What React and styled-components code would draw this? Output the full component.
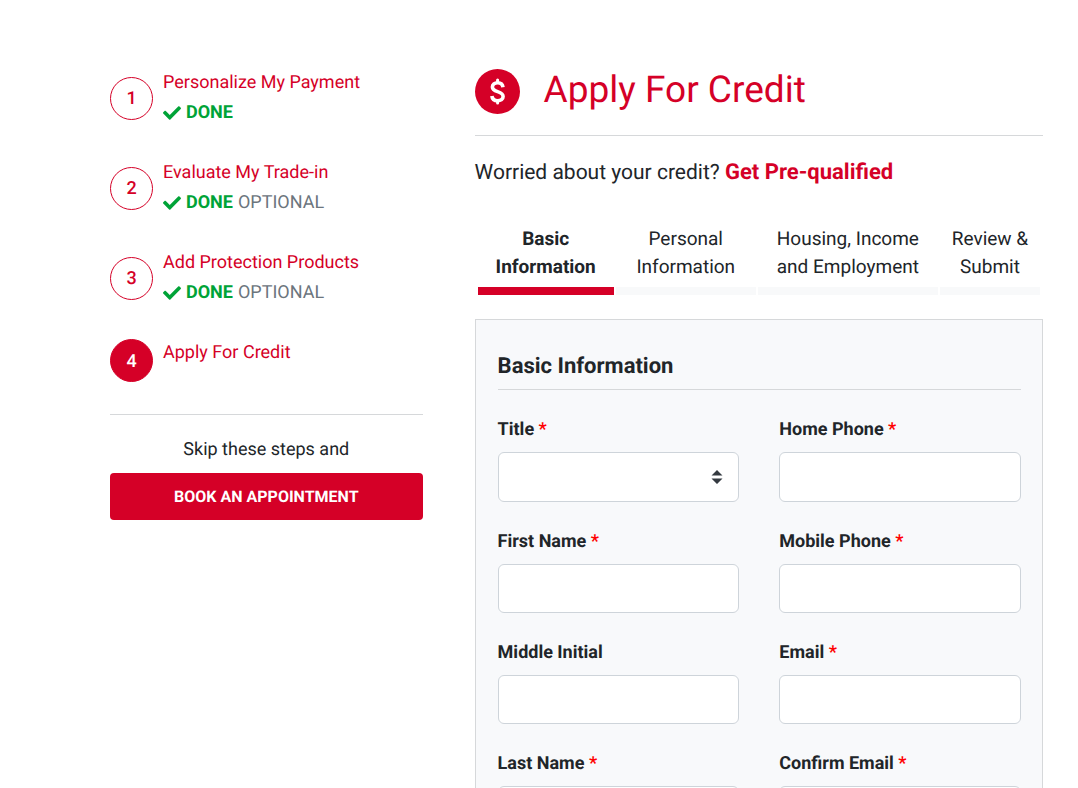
import React, { useState } from 'react'
import styled, { createGlobalStyle } from 'styled-components'
import { FaCheck } from 'react-icons/fa'

const red = '#d50027'
const green = '#00a337'
const ink = '#212529'
const rule = '#d6d8da'

const GlobalStyle = createGlobalStyle`
  *, *::before, *::after {
    box-sizing: border-box;
  }
  body {
    margin: 0;
    background: #fff;
    color: ${ink};
    font-family: Roboto, "Liberation Sans", sans-serif;
    font-size: 18px;
    line-height: 30px;
    text-rendering: geometricPrecision;
  }
`

const Page = styled.div`
  display: grid;
  grid-template-columns: 11fr 20fr;
  column-gap: 52px;
  align-items: start;
  padding: 68px 35px 40px 110px;
`

const StepList = styled.ol`
  display: flex;
  flex-direction: column;
  gap: 30px;
  margin: 0;
  padding: 0 0 32px;
  border-bottom: 1px solid ${rule};
  list-style: none;
`

const Step = styled.li`
  display: flex;
  align-items: ${({ $current }) => ($current ? 'flex-start' : 'center')};
  gap: 10px;
`

const StepNumber = styled.span`
  display: flex;
  flex: none;
  align-items: center;
  justify-content: center;
  width: 43px;
  height: 43px;
  margin-top: ${({ $current }) => ($current ? '1px' : 0)};
  padding-top: 2px;
  border: 1px solid ${red};
  border-radius: 50%;
  background: ${({ $current }) => ($current ? red : '#fff')};
  color: ${({ $current }) => ($current ? '#fff' : red)};
  font-weight: 500;
`

const StepLink = styled.a`
  display: block;
  color: ${red};
  text-decoration: none;
`

const Status = styled.div`
  display: flex;
  align-items: center;
  gap: 5px;
  color: #6c757d;

  svg {
    color: ${green};
  }

  strong {
    color: ${green};
  }
`

const Skip = styled.p`
  margin: 20px 0 8px;
  text-align: center;
`

const BookButton = styled.button`
  width: 100%;
  height: 47px;
  border: 0;
  border-radius: 4px;
  background: ${red};
  color: #fff;
  font: 700 16px Roboto, "Liberation Sans", sans-serif;
  text-rendering: inherit;
  cursor: pointer;
`

const Header = styled.header`
  display: flex;
  align-items: center;
  gap: 24px;
  padding-bottom: 21px;
  border-bottom: 1px solid ${rule};
`

const HeaderIcon = styled.svg`
  flex: none;
  width: 45px;
  height: 45px;
`

const PageTitle = styled.h1`
  margin: 0;
  color: ${red};
  font-size: 37px;
  font-weight: 400;
  line-height: 46px;
`

const Prequalify = styled.p`
  margin: 22px 0 37px;
  font-size: 21px;

  a {
    color: ${red};
    font-size: 22px;
    font-weight: 700;
    text-decoration: none;
  }
`

const Tabs = styled.nav`
  display: grid;
  grid-template-columns: 34fr 35fr 45fr 25fr;
  gap: 2px;
  padding: 0 3px;
`

const Tab = styled.button`
  padding: 0 8px 6px;
  border: 0;
  border-bottom: 8px solid ${({ $active }) => ($active ? red : '#f8f9fa')};
  background: none;
  color: ${ink};
  font-family: inherit;
  font-size: 19px;
  font-weight: ${({ $active }) => ($active ? 700 : 400)};
  line-height: 28px;
  text-align: center;
  text-rendering: inherit;
  cursor: pointer;
`

const Panel = styled.section`
  margin-top: 24px;
  padding: 32px 21px 22px 22px;
  border: 1px solid ${rule};
  background: #f8f9fb;
`

const PanelTitle = styled.h2`
  margin: 0 0 25px;
  padding-bottom: 7px;
  border-bottom: 1px solid ${rule};
  font-size: 22px;
  font-weight: 700;
  line-height: 30px;
`

const Form = styled.form`
  display: grid;
  grid-template-columns: 1fr 1fr;
  gap: 25px 40px;
`

const Field = styled.div`
  display: flex;
  flex-direction: column;
  gap: 7px;
`

const Label = styled.label`
  font-weight: 700;
`

const Required = styled.span`
  color: #f00;
`

const Input = styled.input`
  flex: 1 0 auto;
  width: 100%;
  min-height: 49px;
  padding: 8px 16px;
  border: 1px solid #ced4da;
  border-radius: 6px;
  background: #fff;
  color: ${ink};
  font: inherit;
`

const SelectWrap = styled.div`
  position: relative;
`

const Select = styled(Input).attrs({ as: 'select' })`
  display: block;
  height: 50px;
  appearance: none;
`

const SelectArrows = styled.svg`
  position: absolute;
  top: 18px;
  right: 16px;
  width: 12px;
  height: 14px;
  pointer-events: none;
`

const steps = [
  { title: 'Personalize My Payment', done: true },
  { title: 'Evaluate My Trade-in', done: true, optional: true },
  { title: 'Add Protection Products', done: true, optional: true },
  { title: 'Apply For Credit', current: true },
]

const tabs = ['Basic Information', 'Personal Information', 'Housing, Income and Employment', 'Review & Submit']

const fields = [
  { name: 'title', label: 'Title', required: true, options: ['', 'Mr.', 'Mrs.', 'Ms.'] },
  { name: 'homePhone', label: 'Home Phone', required: true, type: 'tel' },
  { name: 'firstName', label: 'First Name', required: true },
  { name: 'mobilePhone', label: 'Mobile Phone', required: true, type: 'tel' },
  { name: 'middleInitial', label: 'Middle Initial' },
  { name: 'email', label: 'Email', required: true, type: 'email' },
  { name: 'lastName', label: 'Last Name', required: true },
  { name: 'confirmEmail', label: 'Confirm Email', required: true, type: 'email' },
]

const FormField = ({ name, label, required, type = 'text', options, value, onChange }) => {
  const props = { id: name, name, required, value, onChange }

  return (
    <Field>
      <Label htmlFor={name}>
        {label} {required && <Required>*</Required>}
      </Label>
      {options ? (
        <SelectWrap>
          <Select {...props}>
            {options.map(option => <option key={option}>{option}</option>)}
          </Select>
          <SelectArrows viewBox="0 0 12 14" aria-hidden="true">
            <path fill="#343a40" d="M6 0 11.500 5.500H.5ZM.5 8.500h11L6 14Z" />
          </SelectArrows>
        </SelectWrap>
      ) : (
        <Input type={type} {...props} />
      )}
    </Field>
  )
}

const App = () => {
  const [activeTab, setActiveTab] = useState(0)
  const [values, setValues] = useState({})

  const handleChange = e => {
    setValues({ ...values, [e.target.name]: e.target.value })
  }

  return (
    <>
      <GlobalStyle />
      <Page>
        <aside>
          <StepList>
            {steps.map(({ title, done, optional, current }, idx) => (
              <Step key={title} $current={current}>
                <StepNumber $current={current}>{idx + 1}</StepNumber>
                <div>
                  <StepLink href="#">{title}</StepLink>
                  {done && (
                    <Status>
                      <FaCheck size={18} />
                      <strong>DONE</strong>
                      {optional && <span>OPTIONAL</span>}
                    </Status>
                  )}
                </div>
              </Step>
            ))}
          </StepList>
          <Skip>Skip these steps and</Skip>
          <BookButton type="button">BOOK AN APPOINTMENT</BookButton>
        </aside>
        <main>
          <Header>
            <HeaderIcon viewBox="0 0 45 45" aria-hidden="true">
              <circle cx="22.500" cy="22.500" r="22.500" fill={red} />
              <path
                d="M28 18.300c-.3-2.800-2.300-4.600-5.300-4.600-3.100 0-5.300 1.700-5.300 4.300 0 2.400 1.700 3.500 5.200 4.600 3.700 1.200 5.500 2.300 5.500 4.900 0 2.600-2.200 4.200-5.500 4.200s-5.400-1.700-5.700-4.700"
                fill="none"
                stroke="#fff"
                strokeWidth="3.600"
              />
              <path
                d="M22.600 11v2.500M22.600 31.500V34"
                stroke="#fff"
                strokeWidth="3"
                strokeLinecap="round"
              />
            </HeaderIcon>
            <PageTitle>Apply For Credit</PageTitle>
          </Header>
          <Prequalify>
            Worried about your credit? <a href="#">Get Pre-qualified</a>
          </Prequalify>
          <Tabs>
            {tabs.map((tab, idx) => (
              <Tab key={tab} type="button" $active={idx === activeTab} onClick={() => setActiveTab(idx)}>
                {tab}
              </Tab>
            ))}
          </Tabs>
          <Panel>
            <PanelTitle>Basic Information</PanelTitle>
            <Form>
              {fields.map(field => (
                <FormField
                  key={field.name}
                  {...field}
                  value={values[field.name] || ''}
                  onChange={handleChange}
                />
              ))}
            </Form>
          </Panel>
        </main>
      </Page>
    </>
  )
}

export default App
